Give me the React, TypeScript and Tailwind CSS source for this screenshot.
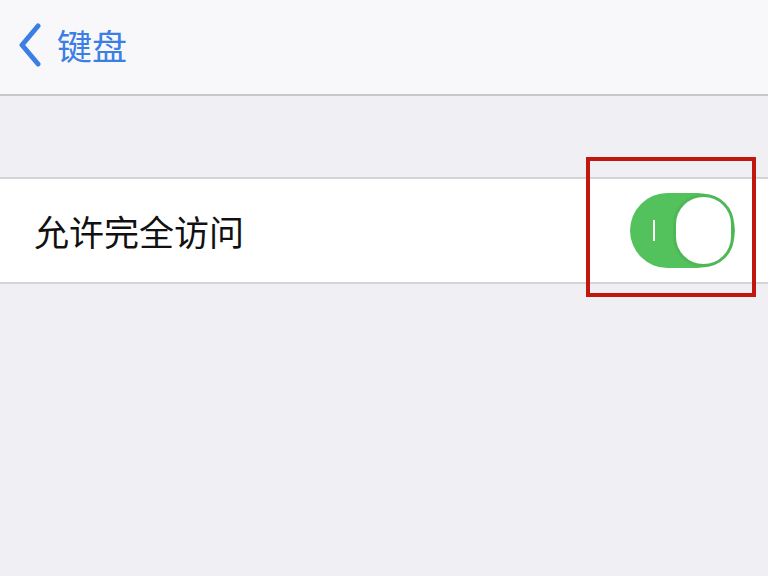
export default function App() {
  return (
    <div
      className="relative h-[576px] w-[768px] overflow-hidden bg-[#efeff4]"
      style={{ fontFamily: '"Noto Sans CJK SC", "Noto Sans", sans-serif' }}
    >
      <header className="flex h-[96px] items-center border-b-2 border-[#c8c8cc] bg-[#f8f8fa] pb-[6px] pl-[18px]">
        <svg width="24" height="44" viewBox="0 0 24 44" className="mt-[2px]">
          <path d="M20 3 L4 22 L20 41" fill="none" stroke="#3a7ee6" strokeWidth="5" strokeLinecap="round" strokeLinejoin="round" />
        </svg>
        <span className="ml-[15px] text-[35px] leading-none text-[#3a7ee6]">键盘</span>
      </header>

      <div className="mt-[81px] flex h-[107px] items-center justify-between border-y-2 border-[#d4d4d8] bg-white pl-[34px] pr-[33px]">
        <span className="text-[35px] leading-none text-[#111]">允许完全访问</span>
        <div className="relative flex h-[75px] w-[105px] items-center rounded-full bg-[#53c15c]">
          <div className="ml-[23px] h-[21px] w-[2px] bg-white" />
          <div className="absolute right-[1px] top-[1px] h-[73px] w-[61px] rounded-full border-[3px] border-[#4eb856] bg-white" />
        </div>
      </div>

      <div className="absolute left-[586px] top-[157px] h-[140px] w-[170px] border-[4px] border-[#c0180f]" />
    </div>
  )
}
